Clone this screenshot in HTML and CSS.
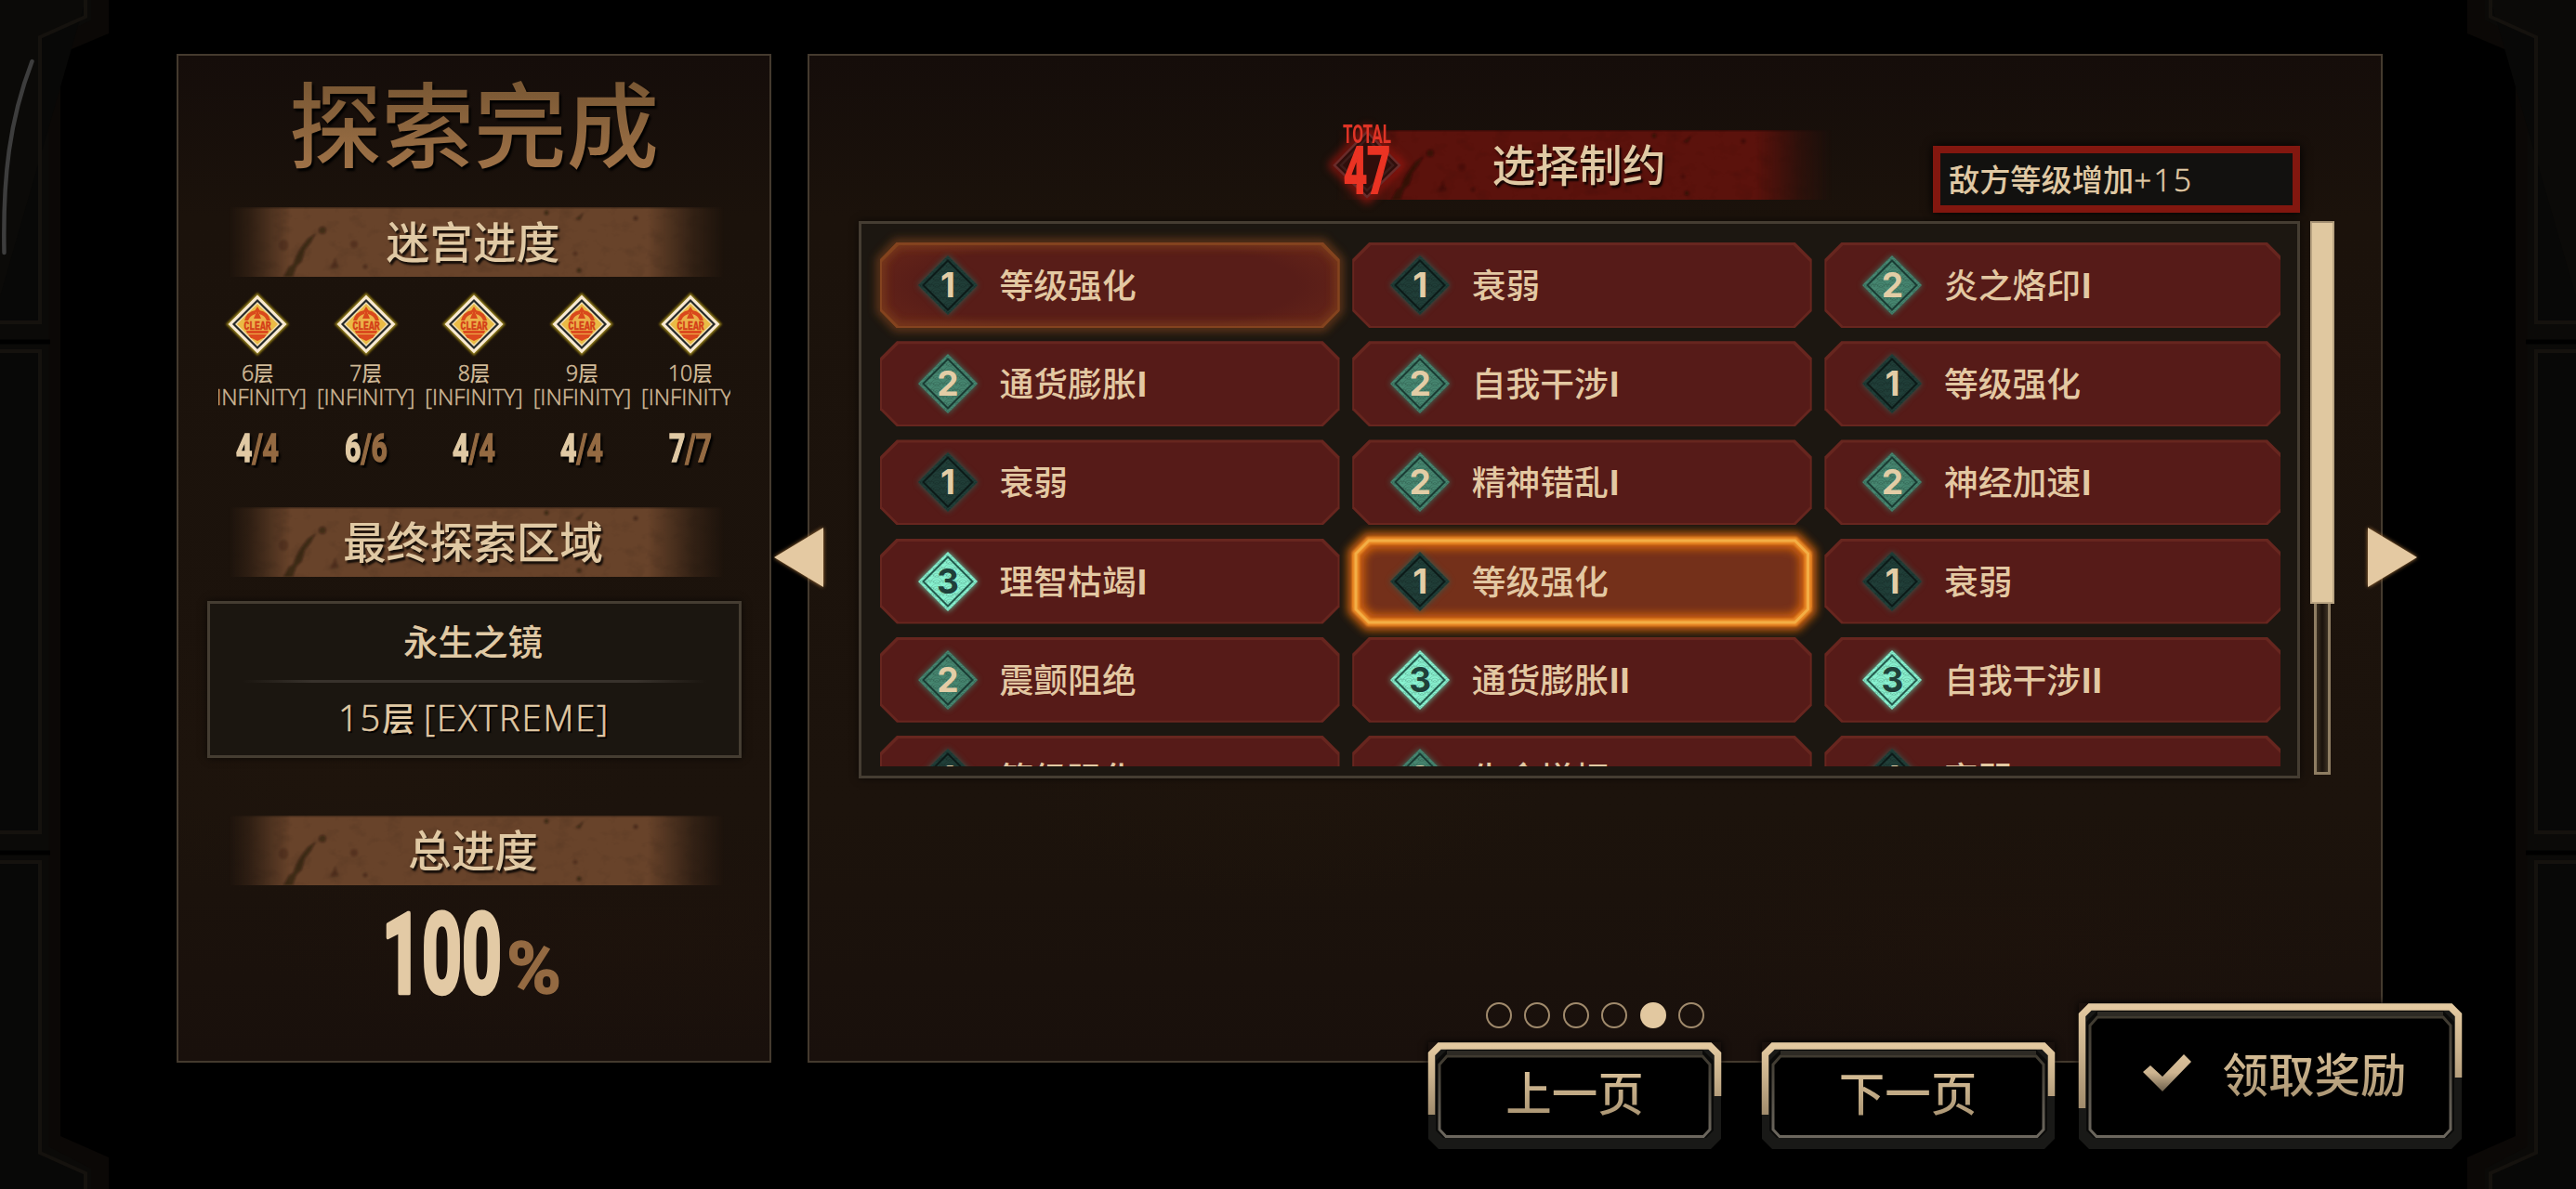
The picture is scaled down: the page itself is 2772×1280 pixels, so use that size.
FILE: index.html
```html
<!DOCTYPE html>
<html lang="zh-CN">
<head>
<meta charset="utf-8">
<title>探索完成</title>
<link rel="stylesheet" href="styles.css">
</head>
<body>
<svg class="defs" width="0" height="0" aria-hidden="true">
  <defs>
    <pattern id="waves" width="14" height="7" patternUnits="userSpaceOnUse">
      <g fill="none" stroke="#000" stroke-opacity=".13" stroke-width="1">
        <circle cx="7" cy="7" r="6.5"/><circle cx="7" cy="7" r="4"/><circle cx="7" cy="7" r="1.5"/>
        <circle cx="0" cy="10.5" r="6.5"/><circle cx="14" cy="10.5" r="6.5"/>
      </g>
    </pattern>
    <linearGradient id="tan" x1="0" y1="0" x2="0" y2="1"><stop offset="0" stop-color="#e3c9a0"/><stop offset=".45" stop-color="#c9b18c"/><stop offset="1" stop-color="#a08b6c"/></linearGradient>
    <linearGradient id="inner" x1="0" y1="0" x2="0" y2="1"><stop offset="0" stop-color="#3f3a30"/><stop offset="1" stop-color="#6c675e"/></linearGradient>
    <linearGradient id="tick" x1="0" y1="0" x2="0" y2="1"><stop offset="0" stop-color="#dbc19a"/><stop offset=".5" stop-color="#cdb490"/><stop offset="1" stop-color="#6d604c"/></linearGradient>
    <linearGradient id="fadeX"><stop offset=".02" stop-color="#fff" stop-opacity="0"/><stop offset=".06" stop-color="#fff" stop-opacity=".25"/><stop offset=".14" stop-color="#fff"/><stop offset=".84" stop-color="#fff"/><stop offset=".93" stop-color="#fff" stop-opacity=".3"/><stop offset=".99" stop-color="#fff" stop-opacity="0"/></linearGradient>
    <mask id="fade"><rect width="550" height="75" fill="url(#fadeX)"/></mask>
    <filter id="b2" x="-20%" y="-40%" width="140%" height="180%"><feGaussianBlur stdDeviation="1.2"/></filter>
    <filter id="b6" x="-20%" y="-40%" width="140%" height="180%"><feGaussianBlur stdDeviation="5"/></filter>
    <filter id="rough"><feTurbulence type="fractalNoise" baseFrequency=".05 .07" numOctaves="4" seed="4"/><feColorMatrix values="0 0 0 0 0  0 0 0 0 0  0 0 0 0 0  2 0 0 0 -1.05"/></filter>
    <symbol id="plate" viewBox="0 0 550 75">
      <g mask="url(#fade)">
        <rect width="550" height="75" fill="currentColor"/>
        <rect width="550" height="75" filter="url(#rough)" opacity=".12"/>
        <g fill="#160c06" opacity=".7" filter="url(#b2)">
          <path d="M70 75 L76 64 L80 62 L84 52 L90 42 L96 34 L105 28 L99 39 L93 46 L90 58 L84 64 L80 75Z" opacity=".7"/>
          <ellipse cx="112" cy="25" rx="4" ry="4" opacity=".6"/>
          <ellipse cx="70" cy="41" rx="5" ry="6" opacity=".3"/><circle cx="146" cy="40" r="4" opacity=".35"/><path d="M120 66l6-12 3 11z" opacity=".4"/><circle cx="158" cy="64" r="2.500" opacity=".45"/>
          <circle cx="353" cy="6" r="2.500" opacity=".7"/><path d="M384 13l9-7-4 8z" opacity=".7"/><circle cx="388" cy="68" r="2.500" opacity=".7"/><circle cx="384" cy="50" r="2.500" opacity=".4"/><circle cx="449" cy="12" r="2.500" opacity=".5"/>
        </g>
        <rect width="550" height="1.5" fill="#000" opacity=".3"/>
      </g>
    </symbol>
    <symbol id="gem" viewBox="0 0 66 66">
      <path d="M33 1L65 33 33 65 1 33z" fill="currentColor"/>
      <path d="M33 1L65 33 33 65 1 33z" fill="url(#waves)"/>
      <path d="M33 6.500L59.500 33 33 59.500 6.500 33z" fill="none" class="gem-line"/>
    </symbol>
    <symbol id="clear" viewBox="0 0 72 72">
      <path d="M36 2L70 36 36 70 2 36z" fill="#8f7a12" filter="url(#b2)"/>
      <path d="M36 4.500L67.500 36 36 67.500 4.500 36z" fill="#f8e9d2"/>
      <path d="M36 10.500L61.500 36 36 61.500 10.500 36z" fill="#f3dfb4" stroke="#262a2a" stroke-width="2.200"/>
      <path d="M36 14L58 36 36 58 14 36z" fill="#eabb45"/>
      <circle cx="36" cy="36" r="14.500" fill="#ecb048"/>
      <path d="M22 32 A15 15 0 0 1 34 21 L34 25 A11 11 0 0 0 26 32z M50 32 A15 15 0 0 0 38 21 L38 25 A11 11 0 0 1 46 32z" fill="#d9481c"/>
      <path d="M36 17l2.500 4-1 3 2.500 6h-8l2.500-6-1-3z" fill="#d9481c"/>
      <path d="M24 43h24l-1 3H25z M26 47h20l-3 4H29z M30 51h12l-6 3z" fill="#dc4a1e"/>
      <text x="36" y="41.500" text-anchor="middle" textLength="29" lengthAdjust="spacingAndGlyphs" class="clear-text">CLEAR</text>
    </symbol>
  </defs>
</svg>

<div class="stage">
  <svg class="frame" viewBox="0 0 2772 1280" aria-hidden="true">
    <g id="side">
      <path d="M2655 0V36L2707 58V1223L2655 1246V1280H2772V0z" fill="#0b0806"/>
      <path d="M2674 0V22L2720 44V1234L2674 1258V1280H2772V0z" fill="#0b0a08"/>
      <path d="M2680 0V18L2729 40V347H2780M2780 378H2729V896H2780M2780 928H2729V1241L2680 1263V1290H2780" fill="#080807" stroke="#15120e" stroke-width="4"/>
      <path d="M2718 368H2772M2718 918H2772" stroke="#000" stroke-width="5"/>
    </g>
    <use href="#side" transform="matrix(-1 0 0 1 2772 0)"/>
    <path d="M34.500 66C10 130 3 190 4.500 272" fill="none" stroke="#3d3d3d" stroke-width="4.500" stroke-linecap="round"/>
  </svg>

  <main class="panels">
    <section class="panel summary">
      <h1 class="title">探索完成</h1>
      <h2 class="plate plate-maze"><svg class="plate-bg"><use href="#plate"/></svg><span>迷宫进度</span></h2>
      <ul class="floors">
        <li class="floor"><svg class="clear"><use href="#clear"/></svg><span class="floor-name"><i>6</i>层</span><span class="floor-mode">[INFINITY]</span><svg class="score"><text x="0" y="31" textLength="46" lengthAdjust="spacingAndGlyphs">4<tspan class="of">/4</tspan></text></svg></li>
        <li class="floor"><svg class="clear"><use href="#clear"/></svg><span class="floor-name"><i>7</i>层</span><span class="floor-mode">[INFINITY]</span><svg class="score"><text x="0" y="31" textLength="46" lengthAdjust="spacingAndGlyphs">6<tspan class="of">/6</tspan></text></svg></li>
        <li class="floor"><svg class="clear"><use href="#clear"/></svg><span class="floor-name"><i>8</i>层</span><span class="floor-mode">[INFINITY]</span><svg class="score"><text x="0" y="31" textLength="46" lengthAdjust="spacingAndGlyphs">4<tspan class="of">/4</tspan></text></svg></li>
        <li class="floor"><svg class="clear"><use href="#clear"/></svg><span class="floor-name"><i>9</i>层</span><span class="floor-mode">[INFINITY]</span><svg class="score"><text x="0" y="31" textLength="46" lengthAdjust="spacingAndGlyphs">4<tspan class="of">/4</tspan></text></svg></li>
        <li class="floor"><svg class="clear"><use href="#clear"/></svg><span class="floor-name"><i>10</i>层</span><span class="floor-mode">[INFINITY]</span><svg class="score"><text x="0" y="31" textLength="46" lengthAdjust="spacingAndGlyphs">7<tspan class="of">/7</tspan></text></svg></li>
      </ul>
      <h2 class="plate plate-area"><svg class="plate-bg"><use href="#plate"/></svg><span>最终探索区域</span></h2>
      <div class="area">
        <div class="area-name">永生之镜</div>
        <div class="area-rule"></div>
        <div class="area-floor"><i>15</i>层 <i>[EXTREME]</i></div>
      </div>
      <h2 class="plate plate-total"><svg class="plate-bg"><use href="#plate"/></svg><span>总进度</span></h2>
      <svg class="percent"><text x="-5" y="90" textLength="129" lengthAdjust="spacingAndGlyphs" class="percent-num">100</text><text x="129" y="90" textLength="59" lengthAdjust="spacingAndGlyphs" class="percent-sign">%</text></svg>
    </section>

    <section class="panel pacts">
      <header class="pacts-head">
        <h2 class="plate plate-red"><svg class="plate-bg"><use href="#plate"/></svg><span>选择制约</span>
          <svg class="total" viewBox="0 0 100 120">
            <path d="M50 22L88 62 50 100 12 62z" class="total-glow"/>
            <path d="M50 26L85 62 50 96 15 62z" class="total-gem"/>
            <path d="M50 33L78 62 50 89 22 62z" class="total-gem-in"/>
            <text x="24" y="38" textLength="52" lengthAdjust="spacingAndGlyphs" class="total-label">TOTAL</text>
            <text x="25" y="92" textLength="50" lengthAdjust="spacingAndGlyphs" class="total-num">47</text>
          </svg>
        </h2>
        <div class="level">敌方等级增加<i>+15</i></div>
      </header>
      <div class="pacts-body">
        <div class="listbox">
          <div class="grid">
            <div class="cell lit"><svg class="aura" viewBox="0 0 495 92"><path class="aura-blur" d="M18 1H477L494 19V73L477 91H18L1 73V19z"/><path class="aura-line" d="M18 1H477L494 19V73L477 91H18L1 73V19z"/></svg><span class="gem g1"><svg><use href="#gem"/></svg><b>1</b></span><span class="name">等级强化</span></div>
            <div class="cell"><span class="gem g1"><svg><use href="#gem"/></svg><b>1</b></span><span class="name">衰弱</span></div>
            <div class="cell"><span class="gem g2"><svg><use href="#gem"/></svg><b>2</b></span><span class="name">炎之烙印<b>I</b></span></div>
            <div class="cell"><span class="gem g2"><svg><use href="#gem"/></svg><b>2</b></span><span class="name">通货膨胀<b>I</b></span></div>
            <div class="cell"><span class="gem g2"><svg><use href="#gem"/></svg><b>2</b></span><span class="name">自我干涉<b>I</b></span></div>
            <div class="cell"><span class="gem g1"><svg><use href="#gem"/></svg><b>1</b></span><span class="name">等级强化</span></div>
            <div class="cell"><span class="gem g1"><svg><use href="#gem"/></svg><b>1</b></span><span class="name">衰弱</span></div>
            <div class="cell"><span class="gem g2"><svg><use href="#gem"/></svg><b>2</b></span><span class="name">精神错乱<b>I</b></span></div>
            <div class="cell"><span class="gem g2"><svg><use href="#gem"/></svg><b>2</b></span><span class="name">神经加速<b>I</b></span></div>
            <div class="cell"><span class="gem g3"><svg><use href="#gem"/></svg><b>3</b></span><span class="name">理智枯竭<b>I</b></span></div>
            <div class="cell selected"><svg class="aura" viewBox="0 0 495 92"><path class="aura-blur" d="M18 2H477L491 16V76L477 90H18L4 76V16z"/><path class="aura-mid" d="M18 2H477L491 16V76L477 90H18L4 76V16z"/><path class="aura-line" d="M18 2H477L491 16V76L477 90H18L4 76V16z"/></svg><span class="gem g1"><svg><use href="#gem"/></svg><b>1</b></span><span class="name">等级强化</span></div>
            <div class="cell"><span class="gem g1"><svg><use href="#gem"/></svg><b>1</b></span><span class="name">衰弱</span></div>
            <div class="cell"><span class="gem g2"><svg><use href="#gem"/></svg><b>2</b></span><span class="name">震颤阻绝</span></div>
            <div class="cell"><span class="gem g3"><svg><use href="#gem"/></svg><b>3</b></span><span class="name">通货膨胀<b>II</b></span></div>
            <div class="cell"><span class="gem g3"><svg><use href="#gem"/></svg><b>3</b></span><span class="name">自我干涉<b>II</b></span></div>
            <div class="cell"><span class="gem g1"><svg><use href="#gem"/></svg><b>1</b></span><span class="name">等级强化</span></div>
            <div class="cell"><span class="gem g2"><svg><use href="#gem"/></svg><b>2</b></span><span class="name">生命增幅</span></div>
            <div class="cell"><span class="gem g1"><svg><use href="#gem"/></svg><b>1</b></span><span class="name">衰弱</span></div>
          </div>
        </div>
        <div class="scroll"><div class="thumb"></div><div class="track"></div></div>
      </div>
      <div class="dots"><span></span><span></span><span></span><span></span><span class="on"></span><span></span></div>
    </section>
  </main>

  <svg class="arrow prev" viewBox="0 0 60 70"><path d="M57 3V67L4 35z"/></svg>
  <svg class="arrow next" viewBox="0 0 60 70"><path d="M3 3V67L56 35z"/></svg>

  <nav class="actions">
    <button class="btn">
      <svg class="btn-frame" viewBox="0 0 315 115"><path d="M11 0H304L315 11V104L304 115H11L0 104V11z" fill="#191917"/><path d="M20 8H295L307 20V95L299 103H16L8 95V20z" fill="#0a0a09"/><path d="M20 15H295L303 24V94L296 101.500H19L12 94V24z" fill="#000" stroke="url(#inner)" stroke-width="3"/><path d="M20 11.500H295" stroke="#2d2a24" stroke-width="5"/><path d="M3.500 78V12.500L12 4H303L311.500 12.500V58" fill="none" stroke="url(#tan)" stroke-width="7.500"/></svg>
      <span>上一页</span>
    </button>
    <button class="btn">
      <svg class="btn-frame" viewBox="0 0 315 115"><path d="M11 0H304L315 11V104L304 115H11L0 104V11z" fill="#191917"/><path d="M20 8H295L307 20V95L299 103H16L8 95V20z" fill="#0a0a09"/><path d="M20 15H295L303 24V94L296 101.500H19L12 94V24z" fill="#000" stroke="url(#inner)" stroke-width="3"/><path d="M20 11.500H295" stroke="#2d2a24" stroke-width="5"/><path d="M3.500 78V12.500L12 4H303L311.500 12.500V58" fill="none" stroke="url(#tan)" stroke-width="7.500"/></svg>
      <span>下一页</span>
    </button>
    <button class="btn claim">
      <svg class="btn-frame" viewBox="0 0 412 157"><path d="M11 0H401L412 11V146L401 157H11L0 146V11z" fill="#191917"/><path d="M20 8H392L404 20V137L396 145H16L8 137V20z" fill="#0a0a09"/><path d="M20 15H392L400 24V136L393 143.500H19L12 136V24z" fill="#000" stroke="url(#inner)" stroke-width="3"/><path d="M20 11.500H392" stroke="#2d2a24" stroke-width="5"/><path d="M3.500 113V12.500L12 4H400L408.500 12.500V80" fill="none" stroke="url(#tan)" stroke-width="7.500"/></svg>
      <svg class="tick" viewBox="0 0 52 40"><path d="M0 19L8 12 21 24 44 0 52 8 21 40z" fill="url(#tick)"/></svg>
      <span>领取奖励</span>
    </button>
  </nav>
</div>
</body>
</html>
```
FILE: styles.css
```css
* { box-sizing: border-box; margin: 0; padding: 0; }
body { background: #000; font-family: "Noto Sans CJK SC", "Noto Sans", sans-serif; color: #e0c9a4; overflow: hidden; }
ul { list-style: none; }
i { font-style: normal; font-family: "Open Sans", "Noto Sans", sans-serif; font-weight: 300; -webkit-text-stroke: .6px currentColor; }
svg { display: block; overflow: visible; }
.defs { position: absolute; }

.stage { position: relative; width: 2772px; height: 1280px; overflow: hidden; background: #000; }
.frame { position: absolute; inset: 0; width: 2772px; height: 1280px; }

.panels { position: relative; display: flex; gap: 39px; padding: 58px 0 0 190px; }
.panel {
  height: 1086px;
  border: 2.500px solid #443a2e;
  background:
    radial-gradient(ellipse 300px 160px at 30% 70%, rgba(34, 22, 12, .4), transparent),
    radial-gradient(ellipse 400px 120px at 75% 88%, rgba(34, 20, 12, .3), transparent),
    linear-gradient(#150d0a 0, #1b120b 16%, #1c130c 75%, #19100c 100%);
}

/* summary column */
.summary { width: 640px; display: flex; flex-direction: column; align-items: center; }
.title {
  margin-top: 20px; height: 112px; line-height: 100px; font-size: 99.5px; font-weight: 500; white-space: nowrap;
  background: linear-gradient(#7a5834 10%, #9c7046 85%); -webkit-background-clip: text; background-clip: text; color: transparent;
  filter: drop-shadow(2px 3px 1px #000);
}
.plate { position: relative; width: 550px; height: 75px; color: #68432a; font-size: 46.7px; font-weight: 500; text-align: center; line-height: 70px; }
.plate-bg { position: absolute; inset: 0; width: 550px; height: 75px; }
.plate span { position: relative; left: -1px; color: #e0c9a4; text-shadow: 2px 3px 2px rgba(0, 0, 0, .8); }
.plate-maze { margin-top: 31px; }

.floors { display: flex; width: 551px; overflow: hidden; margin-top: 15px; justify-content: center; }
.floor { flex: 0 0 116.400px; display: flex; flex-direction: column; align-items: center; white-space: nowrap; color: #cfb896; }
.clear { width: 72px; height: 72px; }
.clear-text { font: bold 13px "Liberation Mono", monospace; fill: #d43d17; stroke: #d43d17; stroke-width: .5px; }
.floor-name { height: 26px; line-height: 26px; font-size: 21.5px; font-weight: 500; margin-top: 3px; }
.floor-name i { font-size: 23px; }
.floor-mode { font: 300 24px/26px "Open Sans", "Noto Sans", sans-serif; height: 26px; -webkit-text-stroke: .5px currentColor; }
.score { width: 46px; height: 38px; margin-top: 26px; font: bold 42px "Roboto", sans-serif; fill: #e0c9a4; stroke: #e0c9a4; stroke-width: 1.5px; filter: drop-shadow(2px 3px 1px #000); }
.score .of { fill: #946a42; stroke: #946a42; }

.plate-area { margin-top: 42px; }
.area { width: 575px; height: 169px; margin-top: 26px; border: 3px solid #453d32; background: #1b1610; box-shadow: 0 0 8px rgba(0, 0, 0, .6); text-align: center; }
.area-name { height: 82px; line-height: 78px; font-size: 37.5px; font-weight: 500; position: relative; left: -1px; }
.area-rule { height: 3px; margin: 0 35px; background: linear-gradient(90deg, transparent, #38322c 15%, #38322c 85%, transparent); }
.area-floor { height: 80px; line-height: 74px; font-size: 35px; font-weight: 500; letter-spacing: 1px; text-shadow: 2px 2px 1px #000; }
.area-floor i { font-size: 38px; letter-spacing: 1.900px; }
.plate-total { margin-top: 62px; }
.percent { width: 188px; height: 92px; margin-top: 26px; font-family: "Roboto", sans-serif; }
.percent-num { font-size: 120px; font-weight: 700; fill: #e3caa5; stroke: #e3caa5; stroke-width: 4.5px; stroke-linejoin: round; }
.percent-sign { font-size: 78px; font-weight: 700; fill: #946a42; stroke: #946a42; stroke-width: 1.5px; }

/* pact list */
.pacts { width: 1695px; display: flex; flex-direction: column; }
.pacts-head { display: flex; align-items: flex-start; height: 178px; padding: 80px 87px 0 556px; }
.plate-red { color: #5b120c; }
.plate-red span { left: -3px; }
.total { position: absolute; left: -6px; top: -24px; width: 100px; height: 120px; }
.total-glow { fill: rgba(110, 10, 5, .55); stroke: #a01810; stroke-width: 5px; filter: blur(5px); }
.total-gem { fill: #300e0b; stroke: #6a2b29; stroke-width: 2.500px; }
.total-gem-in { fill: none; stroke: #3e1d1a; stroke-width: 2.500px; }
.total-label { font: bold 27px "Roboto", sans-serif; fill: #df3426; }
.total-num { font: bold 70px "Roboto", sans-serif; fill: #ea3323; stroke: #ea3323; stroke-width: 2px; }
.level { margin: 17px 0 0 auto; width: 395px; height: 72px; border: 8.5px solid #82170f; background: #12110f; box-shadow: 0 0 10px #000; padding-left: 9px; font-size: 33.2px; font-weight: 500; line-height: 53px; white-space: nowrap; }
.level i { letter-spacing: 2.500px; }

.pacts-body { display: flex; padding-left: 53px; }
.listbox { width: 1551px; height: 600px; border: 3px solid #453d32; background: #1c1711; padding: 20px 0 0 20px; box-shadow: 0 0 8px rgba(0, 0, 0, .6); }
.grid { width: 1507px; height: 564px; display: grid; grid-template-columns: repeat(3, 494.500px); grid-auto-rows: 92px; gap: 14.200px 13.700px; clip-path: inset(-18px 0 0 -18px); }
.cell { --edge: #67261f; --fill: #561b18; position: relative; display: flex; align-items: center; padding-left: 40px; }
.cell::before, .cell::after { content: ""; position: absolute; inset: 0; background: var(--edge); clip-path: polygon(18px 0, calc(100% - 18px) 0, 100% 18px, 100% calc(100% - 18px), calc(100% - 18px) 100%, 18px 100%, 0 calc(100% - 18px), 0 18px); }
.cell::after { inset: 3px 2px 2px; background: var(--fill); }
.lit { --edge: #81421f; --fill: radial-gradient(ellipse 75% 100%, #581d18 55%, #722c19); z-index: 1; }
.selected { --edge: #e08020; --fill: #74301a; z-index: 2; }
.aura { position: absolute; inset: 0; width: 100%; height: 100%; z-index: 1; fill: none; }
.lit .aura-blur { stroke: #84441a; stroke-width: 10px; filter: url(#b6); opacity: .65; }
.lit .aura-line { stroke: #84431f; stroke-width: 2px; }
.selected .aura-blur { stroke: #d8660f; stroke-width: 18px; filter: url(#b6); opacity: .9; }
.selected .aura-mid { stroke: #ea8a28; stroke-width: 8px; filter: url(#b2); }
.selected .aura-line { stroke: #f3ae45; stroke-width: 3px; }
.gem { position: relative; z-index: 2; width: 66px; height: 66px; display: grid; place-items: center; }
.gem > * { grid-area: 1 / 1; }
.gem svg { width: 66px; height: 66px; filter: drop-shadow(0 0 3px var(--glow)); }
.gem-line { stroke: var(--line); stroke-width: 2px; }
.gem b { position: relative; font: bold 37px/66px "Inter", sans-serif; color: #e3cda6; }
.g1 { color: #203e38; --line: #0c1a18; --glow: #2f5a50; }
.g2 { color: #468670; --line: #1a3b33; --glow: #3c7563; }
.g3 { color: #88f2d0; --line: #245a4d; --glow: #62c9a8; }
.g3 b { color: #1f4039; }
.name { position: relative; z-index: 2; margin-left: 22.500px; font-size: 36.8px; font-weight: 500; line-height: 88px; padding-bottom: 4px; white-space: nowrap; color: #e3c8a2; }
.name b { font: bold 37px "Inter", sans-serif; margin-left: 1px; letter-spacing: 1px; }

.scroll { width: 26px; margin-left: 11px; display: flex; flex-direction: column; align-items: center; }
.thumb { width: 26px; height: 412px; background: #e0c8a0; border: 2px solid #b9a482; border-top-color: #a38f72; }
.track { width: 18px; height: 184px; border: 3.500px solid #8e7d62; border-top: 0; background: linear-gradient(90deg, #3b3022, #1a120c, #3b3022); }

.dots { display: flex; justify-content: center; gap: 13.600px; margin-top: 241px; }
.dots span { width: 28px; height: 28px; border: 2.500px solid #a08a6c; border-radius: 50%; }
.dots .on { background: #e2c8a0; border-color: #e2c8a0; }

/* overlay controls */
.arrow { position: absolute; top: 565px; width: 60px; height: 70px; fill: #e4c9a2; filter: drop-shadow(0 0 2px #b07a40); }
.prev { left: 829px; }
.next { left: 2545px; }
.actions { position: absolute; right: 123.500px; top: 1080px; display: flex; align-items: flex-end; }
.btn { position: relative; width: 315px; height: 115px; margin-right: 43.500px; border: 0; background: none; font: 500 49.5px/110px "Noto Sans CJK SC", sans-serif; box-shadow: 0 0 8px #000; display: flex; justify-content: center; align-items: center; white-space: nowrap; }
.btn:nth-child(2) { margin-right: 26px; }
.btn-frame { position: absolute; inset: 0; width: 100%; height: 100%; }
.btn span { position: relative; margin-top: -9px; background: linear-gradient(#dcc39b 25%, #a5906f 80%); -webkit-background-clip: text; background-clip: text; color: transparent; }
.claim { width: 412px; height: 157px; margin-right: 0; justify-content: flex-start; padding-left: 69px; }
.tick { position: relative; width: 52px; height: 40px; margin: -8px 34px 0 0; }
.claim span { margin-top: -8px; }
```
